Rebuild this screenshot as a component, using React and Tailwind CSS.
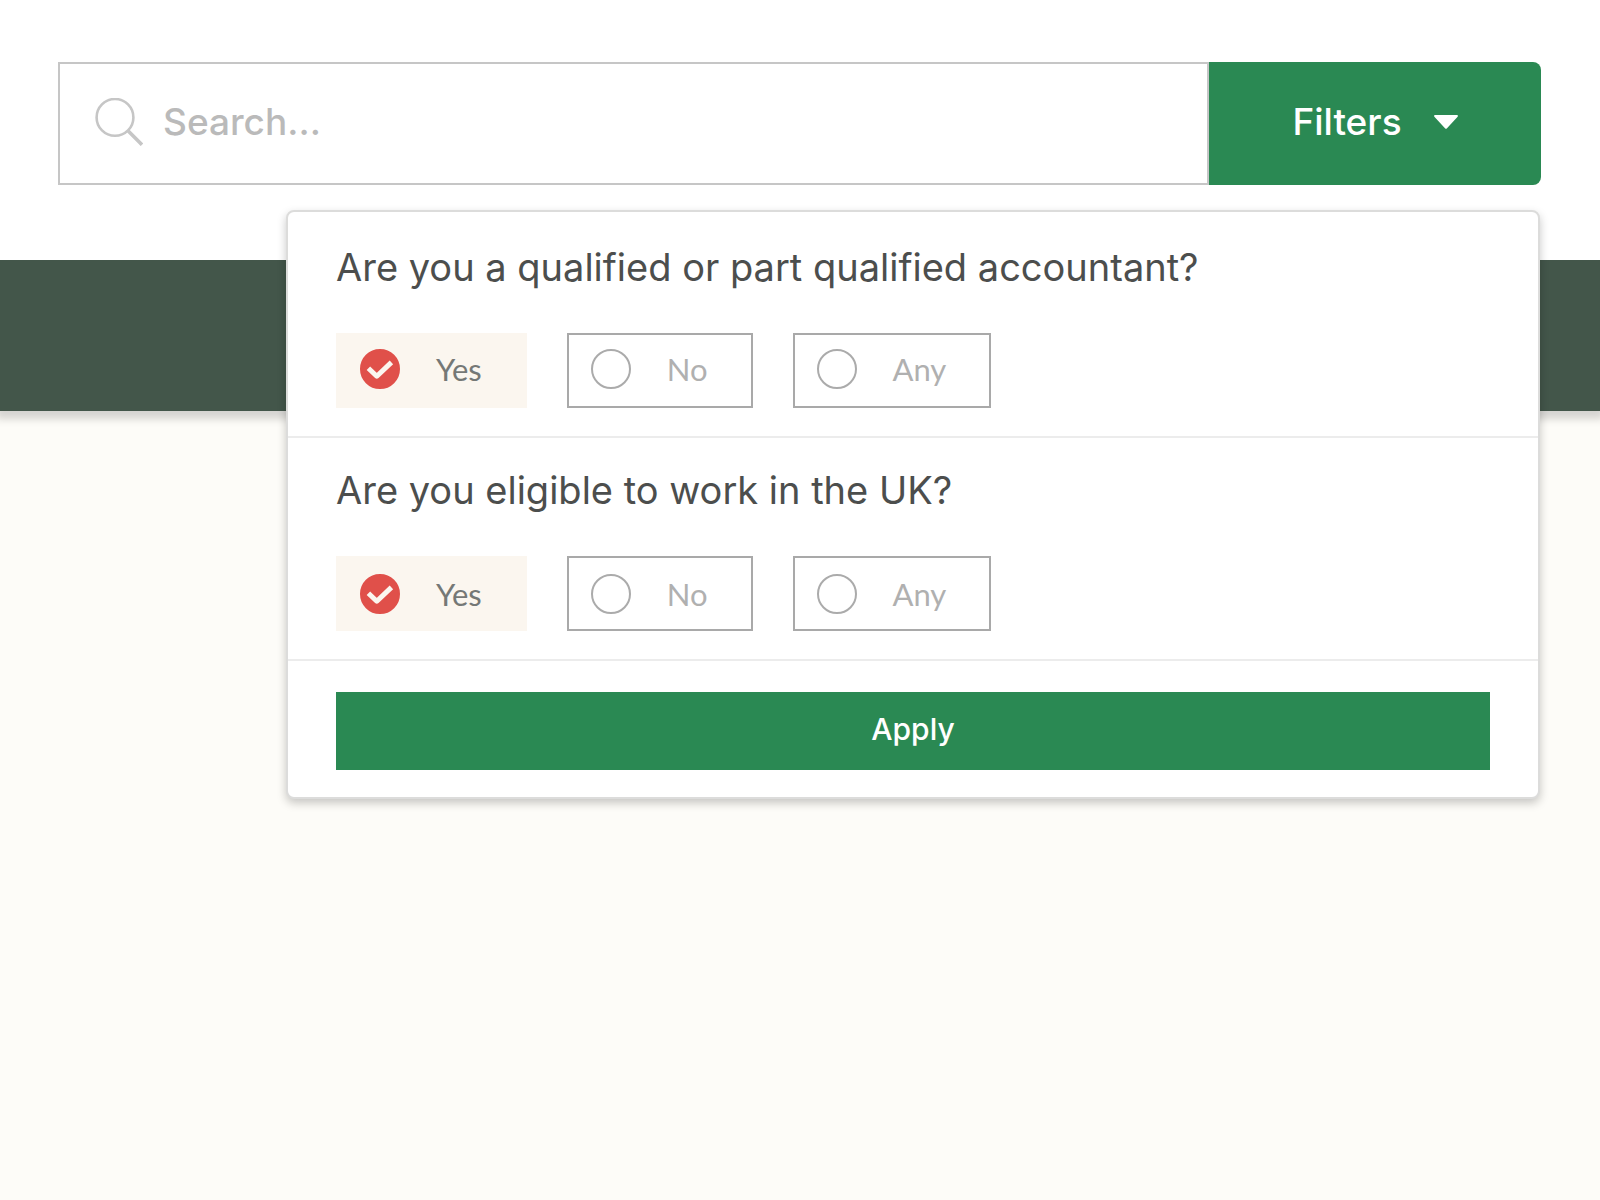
import { useState } from "react";

const QUESTIONS = [
  { id: "qualified", text: "Are you a qualified or part qualified accountant?", lift: "pb-1" },
  { id: "eligible", text: "Are you eligible to work in the UK?", lift: "pb-0" },
];

function SearchIcon() {
  return (
    <svg className="size-12 shrink-0" viewBox="0 0 48 48" fill="none" stroke="#c6c6c6" aria-hidden="true">
      <circle cx="20" cy="19.4" r="18.4" strokeWidth="2.6" />
      <path d="M33 32.8 47 46.8" strokeWidth="3.6" />
    </svg>
  );
}

function Option({ name, label, checked, onSelect, lift }) {
  return (
    <label
      className={`flex h-[75px] cursor-pointer items-center gap-9 border-2 pr-[43px] pl-[22px] ${lift} ${
        checked ? "border-[#fbf6ef] bg-[#fbf6ef] text-[#757876]" : "border-[#a9a9a9] bg-white text-[#b0b0b0]"
      }`}
    >
      <span className="grid size-10 place-items-center">
        <input
          type="radio"
          name={name}
          checked={checked}
          onChange={onSelect}
          className="col-start-1 row-start-1 size-10 cursor-pointer appearance-none rounded-full border-2 border-[#ababab] checked:border-[#e0504a] checked:bg-[#e0504a]"
        />
        {checked && (
          <svg
            className="pointer-events-none col-start-1 row-start-1 size-10"
            viewBox="0 0 40 40"
            fill="none"
            stroke="#fbf6ef"
            strokeWidth="5"
            strokeLinejoin="round"
            aria-hidden="true"
          >
            <path d="M8.4 19.2 16.8 27.2 31.4 13.4" />
          </svg>
        )}
      </span>
      <span className="font-['Lato',sans-serif] text-[31px] leading-10">{label}</span>
    </label>
  );
}

function Question({ id, text, lift }) {
  const [answer, setAnswer] = useState("Yes");
  return (
    <fieldset className="border-b-2 border-[#ececec] px-12 pt-7 pb-7">
      <legend className="contents">
        <span className="block text-[38px] leading-12 text-[#4c4e4d]">{text}</span>
      </legend>
      <div className="mt-[42px] flex flex-wrap gap-10">
        {["Yes", "No", "Any"].map((label) => (
          <Option
            key={label}
            name={id}
            label={label}
            lift={lift}
            checked={answer === label}
            onSelect={() => setAnswer(label)}
          />
        ))}
      </div>
    </fieldset>
  );
}

export default function App() {
  const [query, setQuery] = useState("");
  const [open, setOpen] = useState(true);
  return (
    <div className="min-h-screen overflow-x-hidden bg-[#fdfcf8] font-['Inter',sans-serif]">
      <header className="bg-white pt-[62px] pr-[59px] pb-[75px] pl-[58px]">
        <div className="relative z-10 flex h-[123px]">
          <label className="flex min-w-0 flex-1 items-center gap-5 border-2 border-[#c6c6c6] bg-white pb-1 pl-[35px]">
            <SearchIcon />
            <input
              type="text"
              aria-label="Search"
              placeholder="Search..."
              value={query}
              onChange={(e) => setQuery(e.target.value)}
              className="min-w-0 flex-1 bg-transparent text-[37px] font-medium text-[#4c4e4d] outline-none placeholder:text-[#bababa]"
            />
          </label>
          <button
            type="button"
            aria-expanded={open}
            onClick={() => setOpen(!open)}
            className="flex w-[332px] shrink-0 items-center justify-center gap-8 rounded-r-lg bg-[#2a8953] pb-1 text-[37px] font-medium text-white"
          >
            Filters
            <svg className="h-3.5 w-6" viewBox="0 0 24 14" fill="currentColor" aria-hidden="true">
              <path d="M1.4 0h21.2c1.4 0 1.7 1.2.8 2.1L13 13.2c-.7.7-1.3.7-2 0L.6 2.1C-.3 1.2 0 0 1.4 0Z" />
            </svg>
          </button>
          {open && (
            <form
              onSubmit={(e) => e.preventDefault()}
              className="absolute top-[148px] right-px left-[228px] rounded-lg border-2 border-[#dcdcdb] bg-white pt-[3px] shadow-[0_4px_10px_rgba(0,0,0,0.22)]"
            >
              {QUESTIONS.map((q) => (
                <Question key={q.id} {...q} />
              ))}
              <div className="px-12 pt-[31px] pb-[27px]">
                <button type="submit" className="h-[78px] w-full bg-[#2a8953] pb-1 text-[30px] font-medium text-white">
                  Apply
                </button>
              </div>
            </form>
          )}
        </div>
      </header>
      <div className="h-[151px] bg-[#43564a] shadow-[0_4px_8px_4px_rgba(0,0,0,0.16)] [clip-path:inset(0_0_-24px_0)]" />
    </div>
  );
}
